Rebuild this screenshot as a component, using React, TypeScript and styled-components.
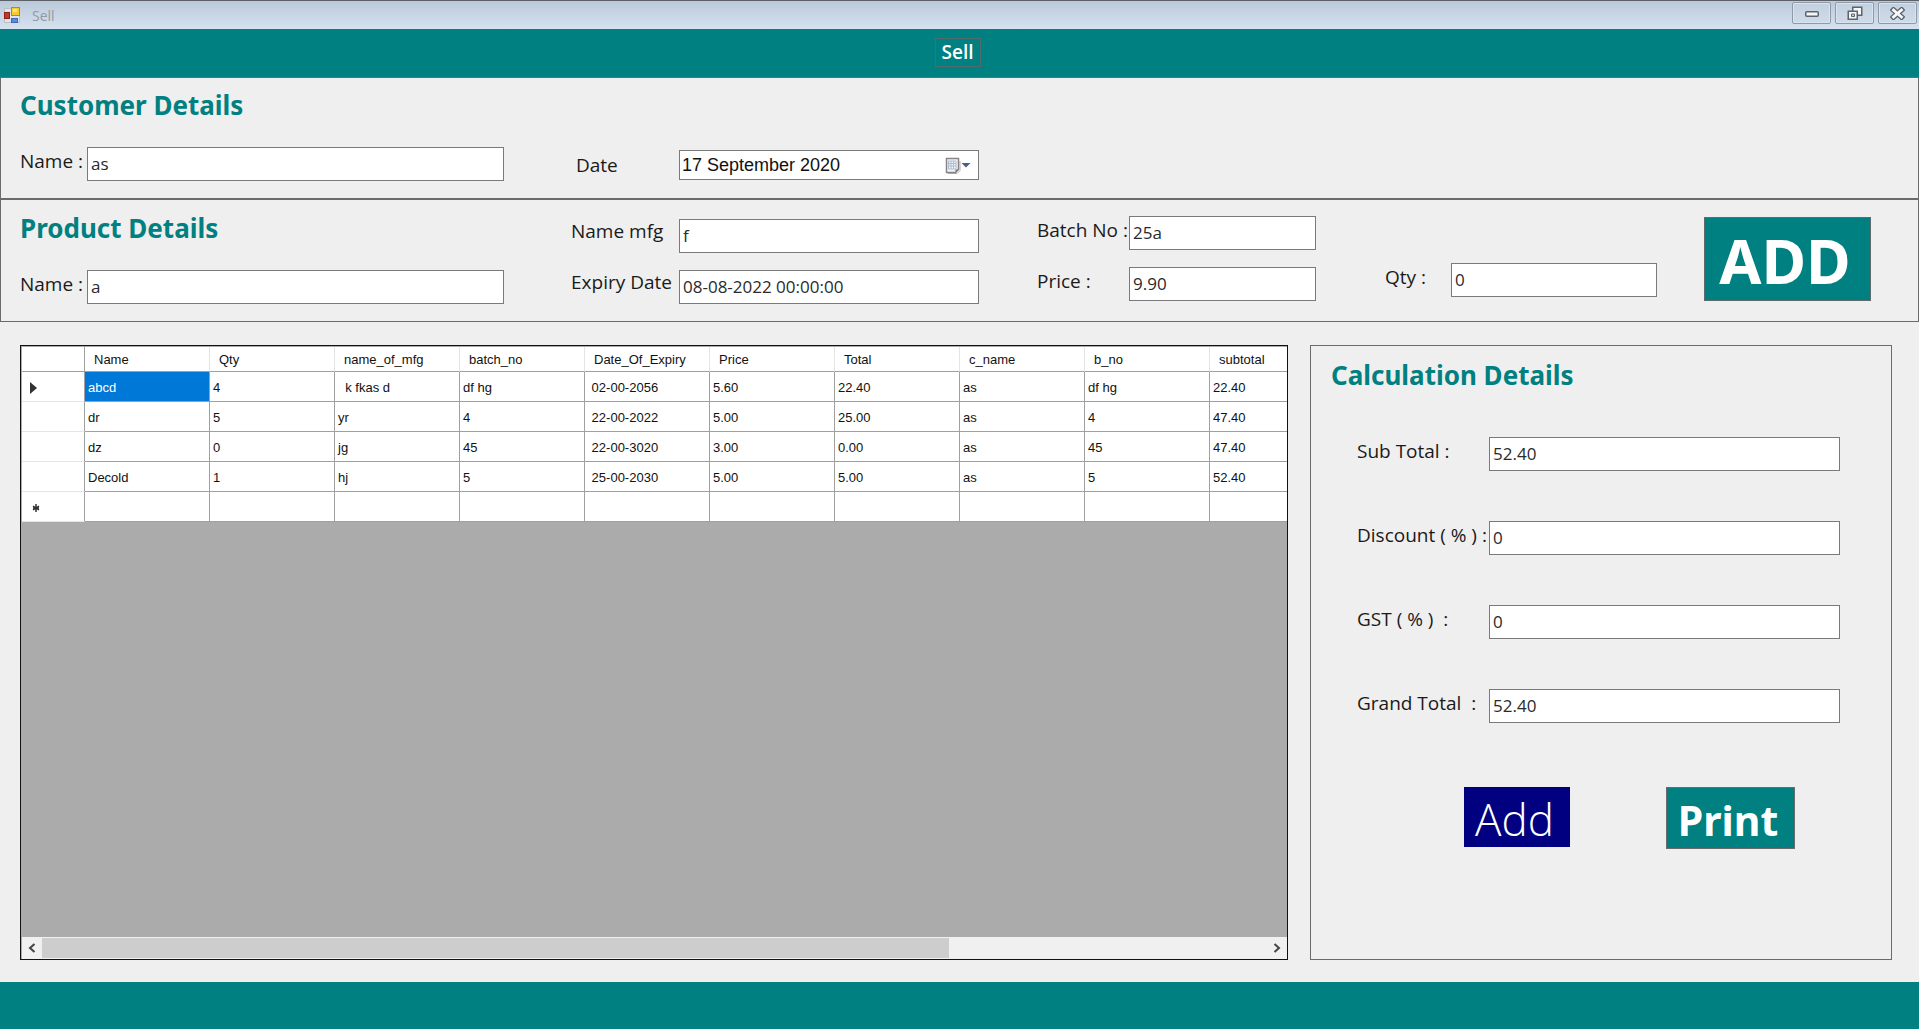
import React from "react";
import styled, { createGlobalStyle } from "styled-components";

const teal = "#008080";
const line = "#6b6b6b";

const GlobalStyle = createGlobalStyle`
  *, *::before, *::after { box-sizing: border-box; }
  body {
    margin: 0;
    background: #efefef;
    color: #1a1a1a;
    font-family: "Open Sans", "Noto Sans", sans-serif;
  }
  button, input { font-family: inherit; margin: 0; }
`;

const Page = styled.div`
  display: flex;
  flex-direction: column;
  min-height: 100vh;
`;

const TitleBar = styled.header`
  display: flex;
  align-items: center;
  height: 29px;
  padding: 1px 2px 0 4px;
  border-top: 1px solid #5d6066;
  background: linear-gradient(#bac9d9, #d6e2f0);
`;

const WindowTitle = styled.span`
  flex: 1;
  padding-left: 11px;
  color: #929aa2;
  font-size: 14px;
  line-height: 20px;
`;

const WindowButtons = styled.div`
  display: flex;
  align-self: flex-start;
  gap: 4px;
`;

const WindowButton = styled.button`
  display: flex;
  align-items: center;
  justify-content: center;
  width: 39px;
  height: 22px;
  padding: 0;
  border: 1px solid #8e9aab;
  border-radius: 2px;
  background: linear-gradient(#c3d0df, #cfdbe8);
  box-shadow: inset 0 0 0 1px #d9e4ef;
`;

const Banner = styled.div`
  display: flex;
  align-items: center;
  justify-content: center;
  height: 48px;
  padding-bottom: 2px;
  background: ${teal};
`;

const BannerButton = styled.button`
  height: 29px;
  margin-right: 4px;
  padding: 0 6px;
  border: 1px solid #4f6c6c;
  background: ${teal};
  color: #fff;
  font-size: 19px;
  font-weight: 600;
  line-height: 26px;
`;

const Section = styled.section<{ $height: number }>`
  display: grid;
  grid-template-columns: 484fr 475fr 337fr 341fr 214px;
  align-items: end;
  min-height: ${(p) => p.$height}px;
  padding: 0 47px 17px 19px;
  border: 1px solid ${line};
`;

const Heading = styled.h2`
  margin: 0;
  color: ${teal};
  font-family: "Noto Sans", "Open Sans", sans-serif;
  font-size: 26px;
  font-weight: 700;
  line-height: 36px;
`;

const Stack = styled.div<{ $gap?: number; $below?: number }>`
  display: flex;
  flex-direction: column;
  gap: ${(p) => p.$gap ?? 17}px;
  padding-bottom: ${(p) => p.$below ?? 0}px;
`;

const Field = styled.div<{ $lead?: number; $label: number }>`
  display: grid;
  grid-template-columns: ${(p) => p.$label}px minmax(0, 1fr);
  align-items: center;
  padding-left: ${(p) => p.$lead ?? 0}px;
`;

const Label = styled.label<{ $raise?: number }>`
  padding-bottom: ${(p) => p.$raise ?? 6}px;
  font-size: 19px;
  line-height: 24px;
  white-space: pre;
`;

const TextBox = styled.input`
  width: 100%;
  height: 34px;
  padding: 0 3px 1px;
  border: 1px solid #7a7a7a;
  border-radius: 0;
  outline: 0;
  background: #fff;
  color: #2a2a2a;
  font-size: 17px;
`;

const DateBox = styled.div`
  display: flex;
  align-items: center;
  height: 30px;
  padding: 0 7px 0 2px;
  border: 1px solid #7a7a7a;
  background: #fff;
`;

const DateInput = styled.input`
  flex: 1;
  min-width: 0;
  padding: 0;
  border: 0;
  outline: 0;
  background: transparent;
  color: #111;
  font-family: "Liberation Sans", Arial, sans-serif;
  font-size: 18px;
`;

const IconButton = styled.button`
  display: flex;
  align-items: center;
  justify-content: center;
  padding: 0;
  border: 0;
  background: transparent;
`;

const AddButton = styled.button`
  height: 84px;
  margin: 0 0 3px 47px;
  padding: 3px 5px 0 0;
  border: 1px solid #5f6b6b;
  background: ${teal};
  color: #fff;
  font-family: "Noto Sans", "Open Sans", sans-serif;
  font-size: 61px;
  font-weight: 700;
  line-height: 72px;
`;

const Main = styled.main`
  display: grid;
  flex: 1;
  grid-template-columns: minmax(0, 1268fr) minmax(0, 582fr);
  gap: 22px;
  padding: 23px 27px 22px 20px;
`;

const GridBox = styled.section`
  display: flex;
  flex-direction: column;
  min-width: 0;
  padding: 1px 0 0 1px;
  border: 1px solid #111;
  background: #ababab;
`;

const GridView = styled.div`
  flex: 1;
  overflow: hidden;
`;

const Table = styled.table`
  width: 1313px;
  border-collapse: separate;
  border-spacing: 0;
  table-layout: fixed;
  background: #fff;
  color: #111;
  font-family: "Liberation Sans", Arial, sans-serif;
  font-size: 13px;
  text-align: left;
  white-space: pre;

  th, td {
    font-weight: 400;
    line-height: 16px;
  }
`;

const HeadCell = styled.th<{ $corner?: boolean }>`
  width: ${(p) => (p.$corner ? 63 : 125)}px;
  height: 25px;
  padding: 2px 9px 0;
  border-right: 1px solid ${(p) => (p.$corner ? "#a0a0a0" : "#e5e5e5")};
  border-bottom: 1px solid #a0a0a0;
`;

const RowHead = styled.th`
  height: 30px;
  padding: 2px 8px 0;
  border-right: 1px solid #a0a0a0;
  border-bottom: 1px solid #e5e5e5;

  svg { display: block; }
`;

const Cell = styled.td<{ $selected?: boolean }>`
  height: 30px;
  padding: 2px 3px 0;
  border-right: 1px solid #a0a0a0;
  border-bottom: 1px solid #a0a0a0;
  background: ${(p) => (p.$selected ? "#0078d7" : "#fff")};
  color: ${(p) => (p.$selected ? "#fff" : "#111")};
`;

const ScrollBar = styled.div`
  display: grid;
  grid-template-columns: 20px minmax(0, 1fr) 20px;
  height: 22px;
  padding: 1px 0;
  background: #f0f0f0;
`;

const Thumb = styled.div`
  width: 74%;
  background: #cdcdcd;
`;

const CalcPanel = styled.section`
  padding: 11px 51px 24px 20px;
  border: 1px solid ${line};
`;

const CalcFields = styled.div`
  display: flex;
  flex-direction: column;
  gap: 50px;
  padding: 44px 0 64px 26px;
`;

const Actions = styled.div`
  display: flex;
  align-items: flex-start;
  justify-content: flex-end;
  gap: 96px;
  padding-right: 45px;
`;

const ActionButton = styled.button<{ $primary?: boolean }>`
  width: ${(p) => (p.$primary ? 129 : 106)}px;
  height: ${(p) => (p.$primary ? 62 : 60)}px;
  padding: 3px 5px 0 0;
  border: 1px solid ${(p) => (p.$primary ? "#6b6b6b" : "#000080")};
  background: ${(p) => (p.$primary ? teal : "#000080")};
  color: #fff;
  font-family: ${(p) => (p.$primary ? '"Noto Sans", "Open Sans", sans-serif' : '"Open Sans", "Noto Sans", sans-serif')};
  font-size: ${(p) => (p.$primary ? 41 : 44)}px;
  font-weight: ${(p) => (p.$primary ? 700 : 300)};
  line-height: 52px;
`;

const Footer = styled.footer`
  height: 47px;
  background: ${teal};
`;

const columns = ["Name", "Qty", "name_of_mfg", "batch_no", "Date_Of_Expiry", "Price", "Total", "c_name", "b_no", "subtotal"];

const rows = [
  ["abcd", "4", "  k fkas d", "df hg", " 02-00-2056", "5.60", "22.40", "as", "df hg", "22.40"],
  ["dr", "5", "yr", "4", " 22-00-2022", "5.00", "25.00", "as", "4", "47.40"],
  ["dz", "0", "jg", "45", " 22-00-3020", "3.00", "0.00", "as", "45", "47.40"],
  ["Decold", "1", "hj", "5", " 25-00-2030", "5.00", "5.00", "as", "5", "52.40"],
];

const totals = [
  { id: "sub-total", label: "Sub Total :", value: "52.40" },
  { id: "discount", label: "Discount ( % ) :", value: "0" },
  { id: "gst", label: "GST ( % )  :", value: "0" },
  { id: "grand-total", label: "Grand Total  :", value: "52.40" },
];

type EntryProps = {
  id: string;
  label: string;
  value: string;
  width: number;
  lead?: number;
  raise?: number;
};

function Entry({ id, label, value, width, lead, raise }: EntryProps) {
  return (
    <Field $lead={lead} $label={width}>
      <Label htmlFor={id} $raise={raise}>{label}</Label>
      <TextBox id={id} type="text" defaultValue={value} />
    </Field>
  );
}

function FormIcon() {
  return (
    <svg width="17" height="17" viewBox="0 0 17 17" aria-hidden="true">
      <rect x="0.5" y="1.5" width="15" height="14" fill="#dfe5ea" stroke="#b9c0c6" />
      <rect x="0.5" y="5.5" width="5" height="6" fill="#c0392b" stroke="#8c2318" />
      <rect x="7.5" y="0.5" width="8" height="8" fill="#f7c92e" stroke="#b98a12" />
      <rect x="9" y="2" width="4" height="3" fill="#fde58a" />
      <rect x="7.5" y="11.5" width="6" height="4" fill="#5b8be0" stroke="#3f66bd" />
    </svg>
  );
}

function CalendarIcon() {
  return (
    <svg width="26" height="17" viewBox="0 0 26 17" aria-hidden="true">
      <path d="M3 16.5h9l3-3V4" fill="none" stroke="#b5b0ae" />
      <path d="M1.5 1.5h12v11l-3 3h-9z" fill="#f2f5f9" stroke="#8a8584" strokeWidth="1.5" />
      <path d="M3.5 4v8M6 4v8M8.5 4v8M11 4v8M3.5 4H11M3.5 6.5H11M3.5 9H11M3.5 12H11" stroke="#aebbd0" />
      <path d="M10.5 15.5v-3h3z" fill="#777" />
      <path d="M16.5 6h9L21 10.5z" fill="#4a5f86" />
    </svg>
  );
}

export default function App() {
  return (
    <>
      <GlobalStyle />
      <Page>
        <TitleBar>
          <FormIcon />
          <WindowTitle>Sell</WindowTitle>
          <WindowButtons>
            <WindowButton aria-label="Minimize">
              <svg width="14" height="8" viewBox="0 0 14 8">
                <rect x="0.75" y="2.75" width="12.5" height="4.5" rx="1" fill="#f5f7f9" stroke="#5c6470" strokeWidth="1.5" />
              </svg>
            </WindowButton>
            <WindowButton aria-label="Restore">
              <svg width="16" height="15" viewBox="0 0 16 15">
                <path d="M5.75 1.25h9v8h-9z" fill="#f5f7f9" stroke="#5c6470" strokeWidth="1.5" />
                <path d="M1.25 5.25h9v8h-9z" fill="#f5f7f9" stroke="#5c6470" strokeWidth="1.5" />
                <path d="M4.5 8h3v2.5h-3z" fill="#c3d0df" stroke="#5c6470" />
              </svg>
            </WindowButton>
            <WindowButton aria-label="Close">
              <svg width="15" height="13" viewBox="0 0 15 13">
                <path d="M3.5 3l8 7M11.5 3l-8 7" stroke="#5c6470" strokeWidth="5.5" strokeLinecap="square" />
                <path d="M3.5 3l8 7M11.5 3l-8 7" stroke="#f5f7f9" strokeWidth="2.8" strokeLinecap="square" />
              </svg>
            </WindowButton>
          </WindowButtons>
        </TitleBar>
        <Banner>
          <BannerButton>Sell</BannerButton>
        </Banner>

        <Section $height={122}>
          <Stack $gap={24}>
            <Heading>Customer Details</Heading>
            <Entry id="customer-name" label="Name :" value="as" width={67} />
          </Stack>
          <Stack $below={1}>
            <Field $lead={72} $label={103}>
              <Label htmlFor="date" $raise={0}>Date</Label>
              <DateBox>
                <DateInput id="date" type="text" defaultValue="17 September 2020" />
                <IconButton aria-label="Open calendar"><CalendarIcon /></IconButton>
              </DateBox>
            </Field>
          </Stack>
        </Section>

        <Section $height={123}>
          <Stack $gap={24}>
            <Heading>Product Details</Heading>
            <Entry id="product-name" label="Name :" value="a" width={67} />
          </Stack>
          <Stack>
            <Entry id="mfg" label="Name mfg" value="f" width={108} lead={67} raise={10} />
            <Entry id="expiry" label="Expiry Date" value="08-08-2022 00:00:00" width={108} lead={67} raise={10} />
          </Stack>
          <Stack $below={3}>
            <Entry id="batch" label="Batch No :" value="25a" width={92} lead={58} />
            <Entry id="price" label="Price :" value="9.90" width={92} lead={58} />
          </Stack>
          <Stack $below={7}>
            <Entry id="qty" label="Qty :" value="0" width={66} lead={69} />
          </Stack>
          <AddButton>ADD</AddButton>
        </Section>

        <Main>
          <GridBox>
            <GridView>
              <Table>
                <thead>
                  <tr>
                    <HeadCell $corner />
                    {columns.map((name) => <HeadCell key={name} scope="col">{name}</HeadCell>)}
                  </tr>
                </thead>
                <tbody>
                  {rows.map((row, r) => (
                    <tr key={r}>
                      <RowHead scope="row">
                        {r === 0 && (
                          <svg width="8" height="12" viewBox="0 0 8 12" role="img" aria-label="Current row">
                            <path d="M0 0l7 6-7 6z" fill="#333" />
                          </svg>
                        )}
                      </RowHead>
                      {row.map((value, c) => <Cell key={c} $selected={r === 0 && c === 0}>{value}</Cell>)}
                    </tr>
                  ))}
                  <tr>
                    <RowHead scope="row">
                      <svg width="12" height="8" viewBox="0 0 12 8" role="img" aria-label="New row">
                        <path d="M6 0v8M3 2l6 4M9 2L3 6M3 4h6" stroke="#333" strokeWidth="1.5" />
                      </svg>
                    </RowHead>
                    {columns.map((name) => <Cell key={name} />)}
                  </tr>
                </tbody>
              </Table>
            </GridView>
            <ScrollBar>
              <IconButton aria-label="Scroll left">
                <svg width="8" height="10" viewBox="0 0 8 10"><path d="M6.500 1L2 5l4.500 4" fill="none" stroke="#444" strokeWidth="2" /></svg>
              </IconButton>
              <Thumb />
              <IconButton aria-label="Scroll right">
                <svg width="8" height="10" viewBox="0 0 8 10"><path d="M1.500 1L6 5 1.500 9" fill="none" stroke="#444" strokeWidth="2" /></svg>
              </IconButton>
            </ScrollBar>
          </GridBox>

          <CalcPanel>
            <Heading>Calculation Details</Heading>
            <CalcFields>
              {totals.map((t) => <Entry key={t.id} {...t} width={132} />)}
            </CalcFields>
            <Actions>
              <ActionButton>Add</ActionButton>
              <ActionButton $primary>Print</ActionButton>
            </Actions>
          </CalcPanel>
        </Main>
        <Footer />
      </Page>
    </>
  );
}
